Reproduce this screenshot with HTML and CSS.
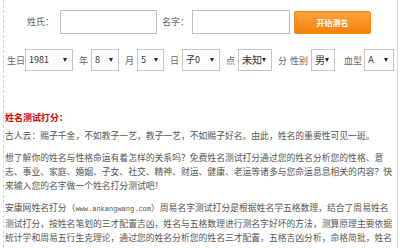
FILE: index.html
```html
<!DOCTYPE html>
<html lang="zh-CN">
<head>
  <meta charset="UTF-8">
  <title>姓名测试打分</title>
  <link rel="stylesheet" href="styles.css">
</head>
<body>
  <div class="box">
    <form class="name-form">
      <div class="row-name">
        <label class="tag">姓氏：</label>
        <input class="txt" type="text">
        <label class="tag tag-2">名字：</label>
        <input class="txt txt-2" type="text">
        <button type="button" class="btn">开始测名</button>
      </div>

      <div class="row-birth">
        <span class="lbl first">生日</span>
        <span class="sel w-year">1981</span>
        <span class="lbl">年</span>
        <span class="sel w-month">8</span>
        <span class="lbl">月</span>
        <span class="sel w-day">5</span>
        <span class="lbl">日</span>
        <span class="sel w-hour">子0</span>
        <span class="lbl">点</span>
        <span class="sel w-min">未知</span>
        <span class="lbl no-gap">分</span>
        <span class="lbl near">性别</span>
        <span class="sel w-sex">男</span>
        <span class="lbl far">血型</span>
        <span class="sel w-blood">A</span>
      </div>
    </form>

    <!-- 说明文字 -->
    <h3 class="title">姓名测试打分：</h3>
    <p class="intro">古人云：赐子千金，不如教子一艺，教子一艺，不如赐子好名。由此，姓名的重要性可见一斑。</p>
    <p class="intro">想了解你的姓名与性格命运有着怎样的关系吗？免费姓名测试打分通过您的姓名分析您的性格、意<br>志、事业、家庭、婚姻、子女、社交、精神、财运、健康、老运等诸多与您命运息息相关的内容？快<br>来输入您的名字做一个姓名打分测试吧！</p>
    <p class="intro last">安康网姓名打分（<span class="url">www.ankangwang.com</span>）周易名字测试打分是根据姓名学五格数理，结合了周易姓名<br>测试打分，按姓名笔划的三才配置吉凶，姓名与五格数理进行测名字好坏的方法，测算原理主要依据<br>统计学和周易五行生克理论，通过您的姓名分析您的姓名三才配置，五格吉凶分析，命格简批，姓名<br>与性格，基础运，成功运等相关内容。</p>
  </div>
</body>
</html>
```

FILE: styles.css
```css
html, body {
  margin: 0;
  padding: 0;
  background: #fff;
}

body {
  font-family: "Noto Sans CJK SC", "Liberation Sans", sans-serif;
  font-size: 9px;
  color: #555;
}

.box {
  margin-left: 3px;
  width: 393px;
  height: 248px;
  border-left: 1px dashed #d4d4d4;
  border-right: 1px solid #d8dde3;
  overflow: hidden;
}

.name-form {
  margin: 0;
}

.row-name {
  display: flex;
  align-items: center;
  padding: 10px 0 0 23px;
  height: 24px;
}

.tag {
  color: #666;
  margin-right: 6px;
  line-height: 24px;
}
.tag-2 {
  margin-left: 5px;
  margin-right: 3px;
}

.txt {
  box-sizing: border-box;
  width: 97px;
  height: 24px;
  margin: 0;
  border: 1px solid #bdbdbd;
  background: #fff;
  padding: 0 4px;
}
.txt-2 {
  width: 98px;
}

.btn {
  box-sizing: border-box;
  margin: 1px 0 0 4px;
  width: 77px;
  height: 23px;
  border: 1px solid #f08a10;
  border-radius: 2px;
  background: linear-gradient(#ffa43a, #f57f0a);
  color: #fff;
  font-family: inherit;
  font-size: 8px;
  font-weight: bold;
  padding: 0;
}

.row-birth {
  display: flex;
  align-items: center;
  margin-top: 15px;
  height: 22px;
}

.lbl {
  color: #666;
  margin: 0 3px 0 6px;
  white-space: nowrap;
}
.lbl.first {
  margin-left: 3px;
  margin-right: 0;
}
.lbl.no-gap {
  margin-right: 0;
}
.lbl.near {
  margin-left: 3px;
}
.lbl.far {
  margin-left: 9px;
  margin-right: 2px;
}

.sel {
  position: relative;
  box-sizing: border-box;
  height: 22px;
  line-height: 20px;
  border: 1px solid #c4c4c4;
  background: #fff;
  color: #333;
  padding-left: 3px;
  white-space: nowrap;
  overflow: hidden;
}
.sel::after {
  content: "";
  position: absolute;
  right: 5px;
  top: 8px;
  border-left: 2.5px solid transparent;
  border-right: 2.5px solid transparent;
  border-top: 4px solid #222;
}

.w-year { width: 48px; }
.w-month { width: 28px; }
.w-day { width: 27px; }
.w-hour { width: 38px; }
.w-min { width: 34px; font-size: 10px; }
.w-sex { width: 24px; font-size: 10px; }
.w-blood { width: 30px; }

.title {
  margin: 40px 0 0 1px;
  font-size: 9px;
  line-height: 14px;
  font-weight: bold;
  color: #e00000;
}

.intro {
  margin: 4px 0 0 1px;
  font-size: 8.8px;
  line-height: 14px;
  color: #555;
  white-space: nowrap;
}
.intro + .intro {
  margin-top: 8px;
}
.intro.last {
  line-height: 14.5px;
}

.url {
  font-family: "Liberation Mono", monospace;
  font-size: 7px;
}
```
